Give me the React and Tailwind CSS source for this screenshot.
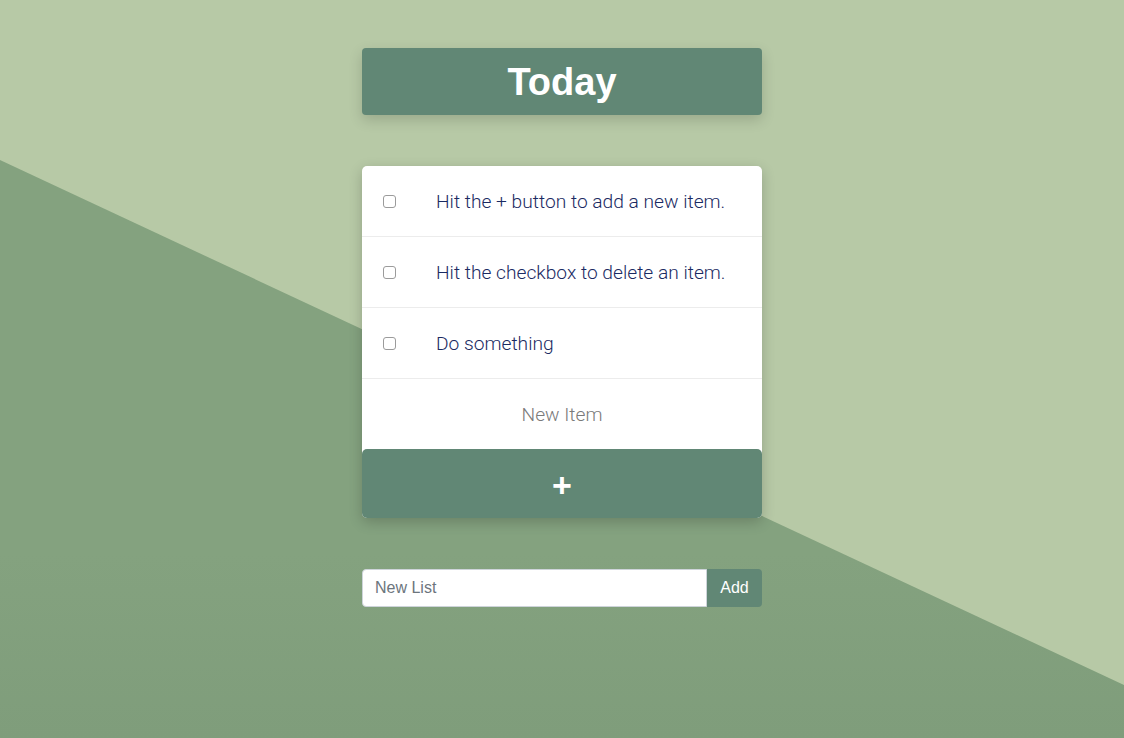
import React from "react";

const items = [
  "Hit the + button to add a new item.",
  "Hit the checkbox to delete an item.",
  "Do something",
];

export default function App() {
  return (
    <div className="relative min-h-[738px] w-full overflow-hidden bg-[#b7c9a6] font-['Liberation_Sans',Arial,sans-serif]">
      <div className="absolute inset-0 bg-[linear-gradient(to_bottom,#84a27f_75%,#7f9d7b_100%)] [clip-path:polygon(0_160px,100%_685px,100%_100%,0_100%)]" />
      <div className="relative mx-auto flex w-[400px] flex-col pt-[48px]">
        <div className="flex h-[67px] items-center justify-center rounded-[4px] bg-[#618775] shadow-[0_5px_14px_rgba(0,0,0,0.16)]">
          <h1 className="text-[38px] font-bold leading-none text-white">Today</h1>
        </div>

        <div className="mt-[51px] rounded-[5px] bg-white shadow-[0_4px_14px_rgba(0,0,0,0.2)]">
          {items.map((t) => (
            <div key={t} className="flex h-[71px] items-center border-b border-[#ececec]">
              <input
                type="checkbox"
                className="ml-[21px] h-[13px] w-[13px] appearance-none rounded-[3px] border border-[#9b9b9b] bg-white"
              />
              <span className="ml-[40px] pt-[3px] font-['Roboto',sans-serif] text-[19.2px] font-light text-[#1a2a62]">{t}</span>
            </div>
          ))}
          <div className="flex h-[70px] items-center justify-center pt-[3px]">
            <span className="font-['Roboto',sans-serif] text-[19.2px] font-light text-[#7a7a7a]">New Item</span>
          </div>
          <button className="flex h-[69px] w-full items-center justify-center rounded-[5px] bg-[#618775] pt-[3px] text-[34px] font-bold leading-none text-white">
            +
          </button>
        </div>

        <div className="mt-[51px] flex h-[38px]">
          <input
            placeholder="New List"
            className="h-full flex-1 rounded-l-[4px] border border-[#ced4da] bg-white px-[12px] text-[16px] text-[#495057] placeholder:text-[#6c757d] outline-none"
          />
          <button className="h-full w-[55px] rounded-r-[4px] bg-[#618775] text-[16px] text-white">Add</button>
        </div>
      </div>
    </div>
  );
}
